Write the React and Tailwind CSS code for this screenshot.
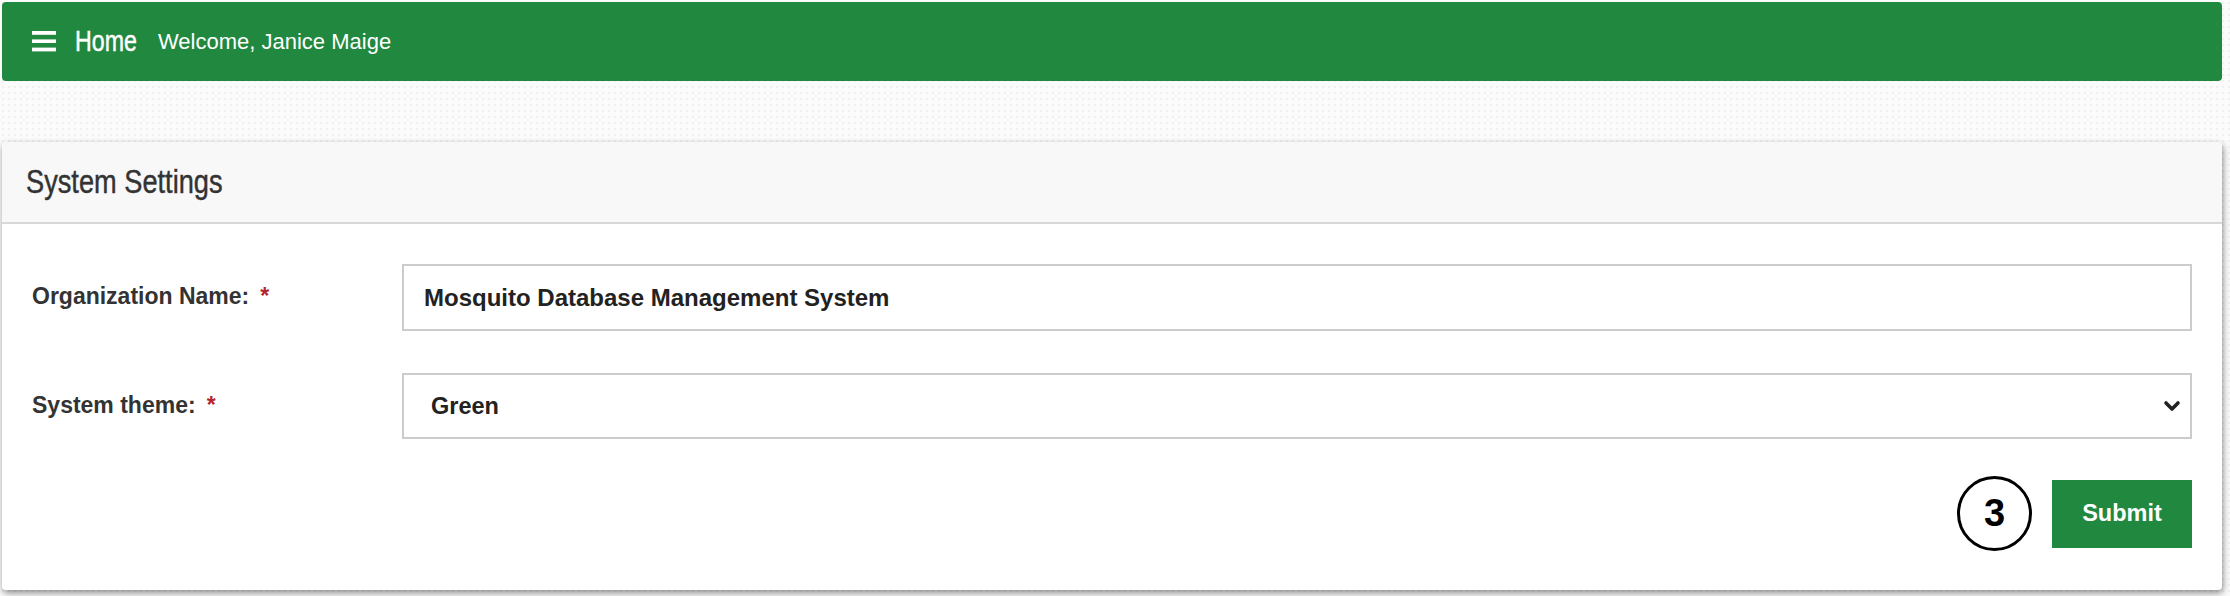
import { ChevronDown } from 'lucide-react'

const sans = "font-['Liberation_Sans',Arial,sans-serif]"

// 三 menu icon
function MenuIcon() {
  return (
    <svg width="24" height="21" viewBox="0 0 24 21" className="shrink-0">
      <rect x="0" y="0" width="24" height="3.8" fill="#fff" />
      <rect x="0" y="8.4" width="24" height="3.6" fill="#fff" />
      <rect x="0" y="16.6" width="24" height="3.8" fill="#fff" />
    </svg>
  )
}

// condensed heading text: no narrow face installed, so squeeze it
function Narrow({ children, width, className = '' }) {
  return (
    <span className={`inline-block ${width} ${className}`}>
      <span className="inline-block origin-left scale-x-[0.8] whitespace-nowrap [-webkit-text-stroke:0.45px_currentColor]">
        {children}
      </span>
    </span>
  )
}

function Required() {
  return <span className="ml-[11px] text-[#b3262d]">*</span>
}

export default function App() {
  return (
    <div
      className={`w-[2230px] h-[596px] overflow-hidden pt-[2px] pl-[2px] pr-[8px] bg-[#fbfbfb] bg-[radial-gradient(circle,#f0f0f0_1.2px,transparent_1.6px)] bg-[length:6px_6px] ${sans}`}
    >
      {/* top bar */}
      <div className="h-[79px] rounded-[4px] bg-[#21883f] flex items-center pl-[30px] text-white">
        <MenuIcon />
        <Narrow width="w-[62px]" className="ml-[19px] text-[29px] leading-none">Home</Narrow>
        <span className="ml-[21px] text-[22px] leading-none">Welcome, Janice Maige</span>
      </div>

      {/* settings card */}
      <div className="mt-[61px] rounded-[4px] bg-white shadow-[1px_3px_7px_rgba(0,0,0,0.45)] overflow-hidden">
        <div className="h-[82px] bg-[#f8f8f8] border-b-2 border-[#d8d8d8] flex items-center pl-[24px] pb-[2px]">
          <h2 className="text-[34px] leading-none text-[#333]">
            <Narrow width="w-[198px]">System Settings</Narrow>
          </h2>
        </div>

        <div className="pt-[40px] pb-[39px] pl-[30px] pr-[30px]">
          <div className="flex items-start">
            <label className="w-[370px] shrink-0 pt-[21px] text-[23px] leading-[23px] font-bold text-[#333]">
              Organization Name:<Required />
            </label>
            <div className="flex-1 h-[67px] border-2 border-[#cccccc] flex items-center pl-[20px] text-[24px] font-bold text-[#222]">
              Mosquito Database Management System
            </div>
          </div>

          <div className="flex items-start mt-[42px]">
            <label className="w-[370px] shrink-0 pt-[21px] text-[23px] leading-[23px] font-bold text-[#333]">
              System theme:<Required />
            </label>
            <div className="flex-1 h-[66px] border-2 border-[#cccccc] flex items-center justify-between pl-[27px] pr-[6px] text-[23.5px] font-bold text-[#222]">
              <span className="pt-[2px]">Green</span>
              <ChevronDown size={24} strokeWidth={3.6} className="text-[#222]" />
            </div>
          </div>

          <div className="flex justify-end items-center mt-[37px]">
            <div className="w-[75px] h-[75px] rounded-full border-[3px] border-black flex items-center justify-center text-[38px] font-bold text-black">
              3
            </div>
            <button className="ml-[20px] w-[140px] h-[68px] bg-[#21883f] text-white text-[23.5px] font-bold flex items-center justify-center">
              Submit
            </button>
          </div>
        </div>
      </div>
    </div>
  )
}
